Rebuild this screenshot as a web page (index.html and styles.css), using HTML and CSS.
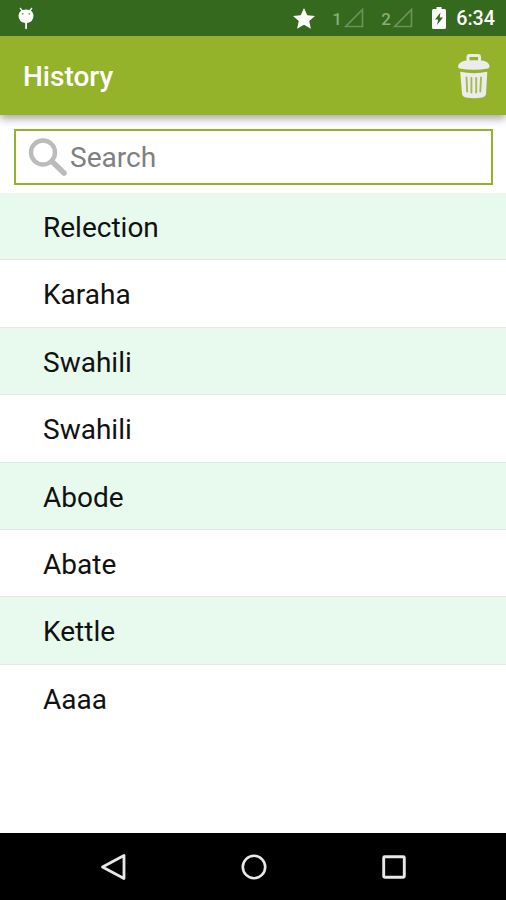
FILE: index.html
```html
<!DOCTYPE html>
<html lang="en">
<head>
    <meta charset="UTF-8">
    <meta name="viewport" content="width=device-width, initial-scale=1.0">
    <title>History</title>
    <link rel="stylesheet" href="styles.css">
</head>
<body>
    <!-- Status bar -->
    <div class="status-bar">
        <svg class="debug-icon" width="18" height="24" viewBox="0 0 18 24">
            <path d="M3 2l2.500 3M15 2l-2.500 3" stroke="#fff" stroke-width="1.200"/>
            <path d="M1.500 9.500Q2 3.500 9 3.500Q16 3.500 16.500 9.500Q16.500 16 10 17V22.500Q9 24 8.200 22.500V17Q1.500 16 1.500 9.500Z" fill="#fff"/>
            <circle cx="5.700" cy="7.700" r="1" fill="#8fa583"/>
            <circle cx="12.300" cy="7.700" r="1" fill="#8fa583"/>
        </svg>
        <div class="status-right">
            <svg class="star" width="22" height="21" viewBox="0 0 22 21">
                <path d="M11 0L14.300 7.200L22 8L16.200 13.100L17.900 20.700L11 16.700L4.100 20.700L5.800 13.100L0 8L7.700 7.200Z" fill="#fff"/>
            </svg>
            <span class="sim">1</span>
            <svg class="signal" width="20" height="20" viewBox="0 0 20 20">
                <path d="M18.500 1.500V18.500H1.800Z" fill="none" stroke="#6b9359" stroke-width="1.700"/>
            </svg>
            <span class="sim">2</span>
            <svg class="signal" width="20" height="20" viewBox="0 0 20 20">
                <path d="M18.500 1.500V18.500H1.800Z" fill="none" stroke="#6b9359" stroke-width="1.700"/>
            </svg>
            <svg class="battery" width="14" height="22" viewBox="0 0 14 22">
                <path d="M4.500 0H9.500V2H12.500Q14 2 14 3.500V20.500Q14 22 12.500 22H1.500Q0 22 0 20.500V3.500Q0 2 1.500 2H4.500Z" fill="#fff"/>
                <path d="M8.500 5.500L3 12.500H6.200L5 18L11 10.500H7.700Z" fill="#34691e"/>
            </svg>
            <span class="clock">6:34</span>
        </div>
    </div>

    <!-- Title bar -->
    <div class="app-bar">
        <h1>History</h1>
        <svg class="trash" width="32" height="46" viewBox="0 0 32 46">
            <path d="M10 8V4Q10 2.500 11.500 2.500H20Q21.500 2.500 21.500 4V8" fill="none" stroke="#ececec" stroke-width="3"/>
            <path d="M1.500 15.500Q0 15 0 13Q1 8.500 8 7.500Q16 6.800 24 7.500Q31 8.500 31.500 13Q31.500 15 30 15.500Q16 18 1.500 15.500Z" fill="#ececec"/>
            <path d="M2.200 18.800Q16 21.500 29.300 18.800L28 41Q27.500 43.500 24 44.500Q16 46 8 44.500Q4.500 43.500 4 41Z" fill="#ececec"/>
            <path d="M8.500 24.500L9.200 38.500M13.400 25V39.500M18.200 25V39.500M23 24.500L22.300 38.500" stroke="#a3bd4c" stroke-width="1.900" stroke-linecap="round"/>
        </svg>
    </div>

    <!-- Search -->
    <div class="search-box">
        <svg class="magnifier" width="40" height="40" viewBox="0 0 40 40">
            <circle cx="15" cy="15.500" r="12" fill="none" stroke="#bbb" stroke-width="4.400"/>
            <path d="M24 24.500L36 36" stroke="#bbb" stroke-width="5.500" stroke-linecap="round"/>
        </svg>
        <input type="text" placeholder="Search">
    </div>

    <!-- Words -->
    <ul class="history-list">
        <li>Relection</li>
        <li>Karaha</li>
        <li>Swahili</li>
        <li>Swahili</li>
        <li>Abode</li>
        <li>Abate</li>
        <li>Kettle</li>
        <li>Aaaa</li>
    </ul>

    <!-- Navigation buttons -->
    <div class="nav-bar">
        <svg width="28" height="28" viewBox="0 0 28 28">
            <path d="M25 2.500V25.500L3.500 14Z" fill="none" stroke="#e8e8e8" stroke-width="2.800" stroke-linejoin="round"/>
        </svg>
        <svg width="28" height="28" viewBox="0 0 28 28">
            <circle cx="14" cy="14" r="11.200" fill="none" stroke="#e8e8e8" stroke-width="2.600"/>
        </svg>
        <svg width="28" height="28" viewBox="0 0 28 28">
            <rect x="3.700" y="3.700" width="20.600" height="20.600" rx="1" fill="none" stroke="#e8e8e8" stroke-width="2.900"/>
        </svg>
    </div>
</body>
</html>
```

FILE: styles.css
```css
* {
    box-sizing: border-box;
}

body {
    font-family: Roboto, "Liberation Sans", sans-serif;
    margin: 0;
    height: 900px;
    display: flex;
    flex-direction: column;
    background-color: #fff;
    overflow: hidden;
}

svg {
    display: block;
    flex-shrink: 0;
}

/* Status bar */
.status-bar {
    height: 36px;
    flex-shrink: 0;
    display: flex;
    justify-content: space-between;
    align-items: center;
    padding: 0 11px 0 17px;
    background-color: #34691e;
    color: #fff;
    z-index: 1; /* Stays above the title bar shadow */
}

.status-right {
    display: flex;
    align-items: center;
}

.sim {
    font-size: 17px;
    font-weight: 500;
    line-height: 20px;
    padding-top: 1px;
    color: #8bad7c;
    width: 12px;
}

.star {
    margin-right: 17px;
}

.signal {
    margin-right: 17px;
}

.battery {
    margin: 0 10px 0 2px;
}

.clock {
    font-size: 19.7px;
    font-weight: 500;
    line-height: 24px;
    padding-top: 2px;
}

/* Title bar */
.app-bar {
    height: 79px;
    flex-shrink: 0;
    display: flex;
    justify-content: space-between;
    align-items: center;
    padding: 0 16px 0 23px;
    background-color: #94b32b;
    box-shadow: 0 3px 9px rgba(0, 0, 0, 0.4);
}

h1 {
    margin: 0;
    padding-top: 1px;
    font-size: 28px;
    font-weight: 500;
    color: #fff;
}

/* Search */
.search-box {
    height: 56px;
    flex-shrink: 0;
    margin: 14px 13px 8px 14px;
    padding-left: 12px;
    display: flex;
    align-items: center;
    border: 2px solid #94b32b;
    background-color: #fff;
}

.search-box input {
    flex: 1;
    min-width: 0;
    padding: 1px 0 0 2px;
    border: none;
    outline: none;
    background: none;
    font-family: inherit;
    font-size: 28.1px;
}

.search-box input::placeholder {
    color: #808080;
}

/* Words */
.history-list {
    flex: 1;
    margin: 0;
    padding: 0;
    list-style: none;
}

.history-list li {
    height: 67.4px;
    padding-left: 43px;
    border-bottom: 1px solid #e3e8e4;
    font-size: 28px;
    line-height: 69px;
    color: #111;
}

.history-list li:nth-child(odd) {
    background-color: #e7faed;
}

.history-list li:last-child {
    border-bottom: none;
}

/* Navigation buttons */
.nav-bar {
    height: 67px;
    flex-shrink: 0;
    display: flex;
    justify-content: space-between;
    align-items: center;
    padding: 0 98px 0 99px;
    background-color: #000;
}
```
